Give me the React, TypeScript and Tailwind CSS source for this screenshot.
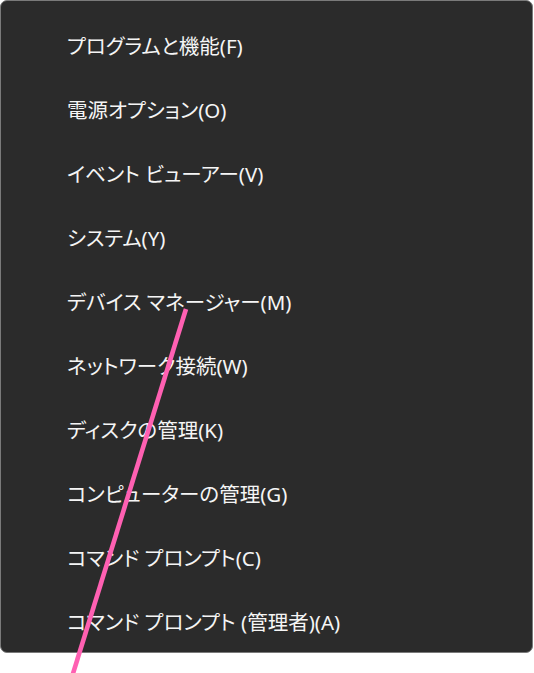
import React from "react";

const items = [
  "プログラムと機能(F)",
  "電源オプション(O)",
  "イベント ビューアー(V)",
  "システム(Y)",
  "デバイス マネージャー(M)",
  "ネットワーク接続(W)",
  "ディスクの管理(K)",
  "コンピューターの管理(G)",
  "コマンド プロンプト(C)",
  "コマンド プロンプト (管理者)(A)",
];

export default function App() {
  return (
    <div className="relative w-[534px] h-[673px] bg-white overflow-hidden">
      <div
        className="w-[533px] h-[653px] bg-[#2b2b2b] border border-[#7a7a7a] rounded-[7px] pt-[13px] flex flex-col text-[#f5f5f5] text-[20.5px] leading-none [font-feature-settings:'palt'] box-border"
        style={{ fontFamily: '"Noto Sans", "Noto Sans CJK JP", sans-serif' }}
      >
        {items.map((t) => (
          <div key={t} className="h-16 shrink-0 flex items-center pl-[66px] whitespace-pre">
            {t}
          </div>
        ))}
      </div>
      <svg
        className="absolute left-0 top-0 pointer-events-none"
        width="534"
        height="673"
        viewBox="0 0 534 673"
      >
        <line x1="186" y1="309" x2="71" y2="680" stroke="#ff60b2" strokeWidth="4.6" />
      </svg>
    </div>
  );
}
